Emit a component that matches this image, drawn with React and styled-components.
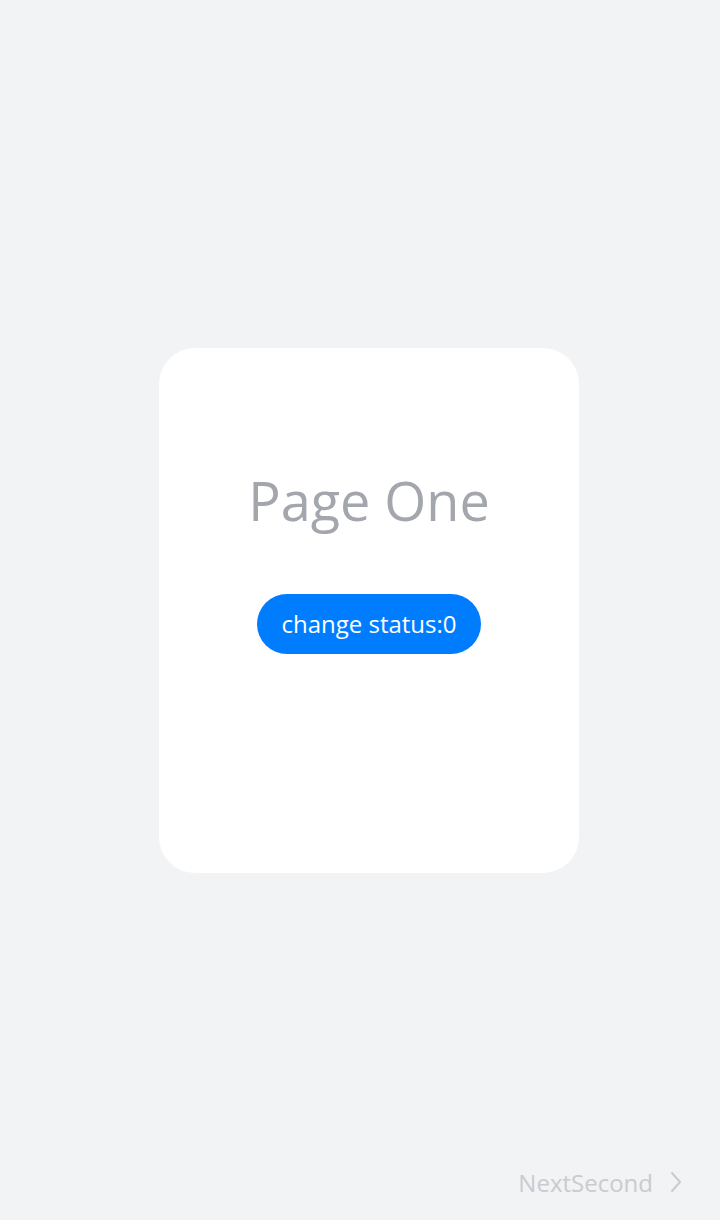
import styled, { createGlobalStyle } from 'styled-components'

const GlobalStyle = createGlobalStyle`
  html, body { margin: 0; padding: 0; background: #f1f3f5; }
  * { box-sizing: border-box; }
`

const Page = styled.div`
  height: 1220px;
  display: flex;
  flex-direction: column;
  background: #f1f3f5;
  font-family: 'Open Sans', 'Noto Sans', sans-serif;
`

const Main = styled.main`
  flex: 1;
  padding-top: 72px;
  display: flex;
  align-items: center;
  justify-content: center;
`

const Card = styled.div`
  width: 420px;
  height: 525px;
  margin-left: 18px;
  background: #fff;
  border-radius: 36px;
  display: flex;
  flex-direction: column;
  align-items: center;
  padding-top: 112px;
`

const Title = styled.h1`
  margin: 0;
  font-size: 54px;
  font-weight: 500;
  line-height: 80px;
  color: #a3a6ad;
`

const StatusBtn = styled.button`
  margin-top: 54px;
  height: 60px;
  min-width: 224px;
  padding: 0 24px;
  border: none;
  border-radius: 30px;
  background: #007dff;
  color: #fff;
  font-family: inherit;
  font-size: 24px;
  font-weight: 500;
  cursor: pointer;
`

const Footer = styled.footer`
  height: 72px;
  display: flex;
  align-items: center;
  justify-content: flex-end;
  padding: 0 37px 4px 0;
  gap: 16px;
  color: #c9cbd0;
  font-size: 24px;
`

export default function App() {
  return (
    <Page>
      <GlobalStyle />
      <Main>
        <Card>
          <Title>Page One</Title>
          <StatusBtn>change status:0</StatusBtn>
        </Card>
      </Main>
      <Footer>
        <span>NextSecond</span>
        <svg width="14" height="22" viewBox="0 0 14 22" fill="none" stroke="currentColor" strokeWidth="2" strokeLinecap="round" strokeLinejoin="round">
          <polyline points="3,2 11,11 3,20" />
        </svg>
      </Footer>
    </Page>
  )
}
